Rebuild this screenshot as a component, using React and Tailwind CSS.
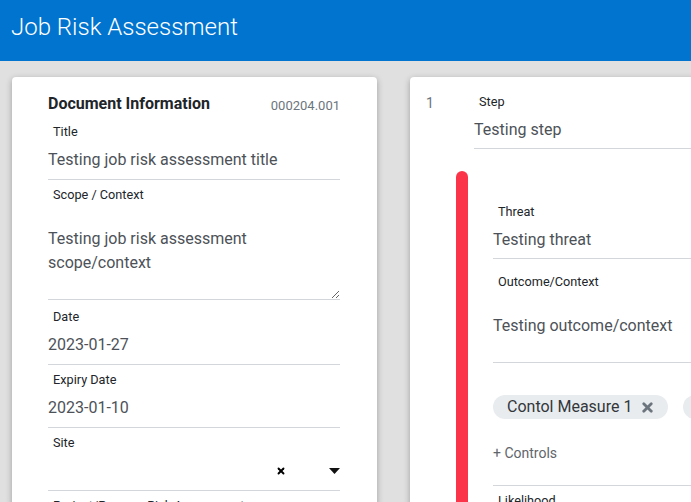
import { X } from 'lucide-react';

const labelCls = 'pl-[5px] text-[12.7px] leading-4 text-[#212529]';
const valueCls = 'border-b border-[#d3d6da] pt-2 pb-[7px] text-base leading-6 text-[#4d5258]';

function Field({ label, value, className = 'mt-[7px]' }) {
  return (
    <div className={className}>
      <div className={labelCls}>{label}</div>
      <div className={valueCls}>{value}</div>
    </div>
  );
}

function AreaField({ label, value, height, className = 'mt-[7px]' }) {
  return (
    <div className={className}>
      <div className={labelCls}>{label}</div>
      <textarea
        readOnly
        defaultValue={value}
        className={`block w-full ${height} resize-y border-b border-[#d3d6da] bg-transparent pt-6 text-base leading-6 text-[#4d5258] outline-none`}
      />
    </div>
  );
}

function Chip({ text }) {
  return (
    <div className="flex h-6 shrink-0 items-center rounded-full bg-[#e9ecef] pl-[14px] pr-[13px] text-base leading-6 text-[#33373b]">
      {text}
      <X className="ml-[8px] h-[15px] w-[15px] text-[#6c757d]" strokeWidth={4.5} />
    </div>
  );
}

export default function App() {
  return (
    <div className="h-screen w-full overflow-hidden bg-[#e0e0e0] font-['Roboto',sans-serif]">
      {/* App bar */}
      <header className="h-[61px] bg-[#0074cf] pl-[11px] pt-[11px]">
        <h1 className="text-[24px] leading-8 font-light text-white">Job Risk Assessment</h1>
      </header>

      <main className="flex items-start gap-[33px] pl-3 pt-4">
        {/* Document information card */}
        <section className="w-[365px] shrink-0 rounded bg-white pl-9 pr-[37px] pt-[17px] pb-10 shadow-[0_2px_6px_rgba(0,0,0,0.3)]">
          <div className="flex items-center justify-between">
            <h2 className="text-base leading-5 font-bold text-[#212529]">Document Information</h2>
            <span className="pt-1 text-[13px] leading-4 text-[#6c757d]">000204.001</span>
          </div>
          <Field label="Title" value="Testing job risk assessment title" className="mt-[10px]" />
          <AreaField label="Scope / Context" value="Testing job risk assessment scope/context" height="h-[97px]" />
          <Field label="Date" value="2023-01-27" className="mt-[9px]" />
          <Field label="Expiry Date" value="2023-01-10" />
          <div className="mt-[7px]">
            <div className={labelCls}>Site</div>
            <div className="flex h-10 items-center justify-end border-b border-[#d3d6da]">
              <X className="h-[10px] w-[10px] text-black" strokeWidth={4.5} />
              <svg className="ml-[43px] h-[6px] w-[11px]" viewBox="0 0 11 6">
                <path d="M0 0h11L5.5 6z" fill="#111" />
              </svg>
            </div>
          </div>
          <Field label="Project/Process Risk Assessment" value="" />
        </section>

        {/* Steps card */}
        <section className="w-[420px] shrink-0 rounded bg-white pl-4 pt-4 shadow-[0_2px_6px_rgba(0,0,0,0.3)]">
          <div className="flex">
            <div className="w-12 shrink-0 text-sm leading-5 text-[#6c757d]">1</div>
            <div className="mt-px flex-1">
              <div className={labelCls}>Step</div>
              <div className="border-b border-[#d3d6da] pt-2 pb-[6px] text-base leading-6 text-[#4d5258]">Testing step</div>
            </div>
          </div>

          <div className="mt-[22px] ml-[30px] flex">
            <div className="w-3 shrink-0 rounded-t-full bg-[#fb3449]" />
            <div className="ml-[25px] flex-1 pt-[33px] pb-10">
              <div>
                <div className={labelCls}>Threat</div>
                <div className="border-b border-[#d3d6da] pt-2 pb-[6px] text-base leading-6 text-[#4d5258]">Testing threat</div>
              </div>
              <AreaField label="Outcome/Context" value="Testing outcome/context" height="h-[73px]" className="mt-[15px]" />
              <div className="mt-8 flex gap-[15px] overflow-hidden">
                <Chip text="Contol Measure 1" />
                <Chip text="Contol Measure 2" />
              </div>
              <div className="mt-6 border-b border-[#d3d6da] pb-[22px] text-sm leading-5 text-[#5f656b]">+ Controls</div>
              <Field label="Likelihood" value="" />
            </div>
          </div>
        </section>
      </main>
    </div>
  );
}
